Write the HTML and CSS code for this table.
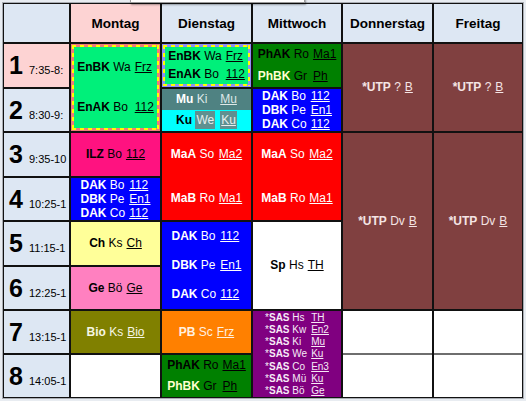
FILE: index.html
```html
<!DOCTYPE html>
<html lang="de">
<head>
<meta charset="utf-8">
<title>Stundenplan</title>
<link rel="stylesheet" href="styles.css">
</head>
<body>
<div class="page">
  <div class="tip"></div>
  <div class="tt">
    <div class="hd"></div>
    <div class="hd today">Montag</div>
    <div class="hd">Dienstag</div>
    <div class="hd">Mittwoch</div>
    <div class="hd">Donnerstag</div>
    <div class="hd">Freitag</div>

    <!-- row 1 -->
    <div class="per today"><div class="pl"><span class="pn">1</span><span class="pt">7:35-8:</span></div></div>
    <div class="cell span2 dash-salmon">
      <div class="frame"><div class="les fill-green">
        <span><b>EnBK</b> Wa</span><span class="rm">Frz</span>
        <span><b>EnAK</b> Bo</span><span class="rm">112</span>
      </div></div>
    </div>
    <div class="cell dash-lav">
      <div class="frame"><div class="les fill-green">
        <span><b>EnBK</b> Wa</span><span class="rm">Frz</span>
        <span><b>EnAK</b> Bo</span><span class="rm">112</span>
      </div></div>
    </div>
    <div class="cell les dkgreen">
      <span><b>PhAK</b> Ro</span><span class="rm">Ma1</span>
      <span><b class="ly">PhBK</b> Gr</span><span class="rm">Ph</span>
    </div>
    <div class="cell span2 les brown">
      <span><b>*UTP</b> ?</span><span class="rm">B</span>
    </div>
    <div class="cell span2 les brown">
      <span><b>*UTP</b> ?</span><span class="rm">B</span>
    </div>

    <!-- row 2 -->
    <div class="per"><div class="pl"><span class="pn">2</span><span class="pt">8:30-9:</span></div></div>
    <div class="cell split">
      <div class="band band-top"></div>
      <div class="band band-bot"></div>
      <span class="s-a top-t"><b class="wh">Mu</b> Ki</span><span class="s-b top-t rm">Mu</span>
      <span class="s-a bot-t"><b>Ku</b> <span class="hl">We</span></span><span class="s-b bot-t"><span class="hl rm">Ku</span></span>
    </div>
    <div class="cell les blue">
      <span><b>DAK</b> Bo</span><span class="rm">112</span>
      <span><b>DBK</b> Pe</span><span class="rm">En1</span>
      <span><b>DAK</b> Co</span><span class="rm">112</span>
    </div>

    <!-- row 3 -->
    <div class="per"><div class="pl"><span class="pn">3</span><span class="pt">9:35-10</span></div></div>
    <div class="cell les hotpink">
      <span><b>ILZ</b> Bo</span><span class="rm">112</span>
    </div>
    <div class="cell span2 les red">
      <span><b>MaA</b> So</span><span class="rm">Ma2</span>
      <span><b>MaB</b> Ro</span><span class="rm">Ma1</span>
    </div>
    <div class="cell span2 les red">
      <span><b>MaA</b> So</span><span class="rm">Ma2</span>
      <span><b>MaB</b> Ro</span><span class="rm">Ma1</span>
    </div>
    <div class="cell span4 les brown">
      <span><b>*UTP</b> Dv</span><span class="rm">B</span>
    </div>
    <div class="cell span4 les brown">
      <span><b>*UTP</b> Dv</span><span class="rm">B</span>
    </div>

    <!-- row 4 -->
    <div class="per"><div class="pl"><span class="pn">4</span><span class="pt">10:25-1</span></div></div>
    <div class="cell les blue">
      <span><b>DAK</b> Bo</span><span class="rm">112</span>
      <span><b>DBK</b> Pe</span><span class="rm">En1</span>
      <span><b>DAK</b> Co</span><span class="rm">112</span>
    </div>

    <!-- row 5 -->
    <div class="per"><div class="pl"><span class="pn">5</span><span class="pt">11:15-1</span></div></div>
    <div class="cell les yellow">
      <span><b>Ch</b> Ks</span><span class="rm">Ch</span>
    </div>
    <div class="cell span2 les blue">
      <span><b>DAK</b> Bo</span><span class="rm">112</span>
      <span><b>DBK</b> Pe</span><span class="rm">En1</span>
      <span><b>DAK</b> Co</span><span class="rm">112</span>
    </div>
    <div class="cell span2 les white">
      <span><b>Sp</b> Hs</span><span class="rm">TH</span>
    </div>

    <!-- row 6 -->
    <div class="per"><div class="pl"><span class="pn">6</span><span class="pt">12:25-1</span></div></div>
    <div class="cell les rose">
      <span><b>Ge</b> Bö</span><span class="rm">Ge</span>
    </div>

    <!-- row 7 -->
    <div class="per"><div class="pl"><span class="pn">7</span><span class="pt">13:15-1</span></div></div>
    <div class="cell les olive">
      <span><b>Bio</b> Ks</span><span class="rm">Bio</span>
    </div>
    <div class="cell les orange">
      <span><b>PB</b> Sc</span><span class="rm">Frz</span>
    </div>
    <div class="cell span2 les purple">
      <span>*<b>SAS</b> Hs</span><span class="rm">TH</span>
      <span>*<b>SAS</b> Kw</span><span class="rm">En2</span>
      <span>*<b>SAS</b> Ki</span><span class="rm">Mu</span>
      <span>*<b>SAS</b> We</span><span class="rm">Ku</span>
      <span>*<b>SAS</b> Co</span><span class="rm">En3</span>
      <span>*<b>SAS</b> Mü</span><span class="rm">Ku</span>
      <span>*<b>SAS</b> Bö</span><span class="rm">Ge</span>
    </div>
    <div class="cell span2 pair"><div class="blank"></div><div class="blank"></div></div>
    <div class="cell span2 pair"><div class="blank"></div><div class="blank"></div></div>

    <!-- row 8 -->
    <div class="per"><div class="pl"><span class="pn">8</span><span class="pt">14:05-1</span></div></div>
    <div class="cell white"></div>
    <div class="cell les dkgreen">
      <span><b>PhAK</b> Ro</span><span class="rm">Ma1</span>
      <span><b class="ly">PhBK</b> Gr</span><span class="rm">Ph</span>
    </div>
  </div>
</div>
</body>
</html>
```

FILE: styles.css
```css
html, body {
  margin: 0;
  padding: 0;
}
body {
  background: #e8ecf1;
  font-family: "Liberation Sans", Arial, sans-serif;
  color: #000;
}
.page {
  position: relative;
  padding: 3px 0 0 3px;
  width: 523px;
  height: 398px;
}
.tip {
  position: absolute;
  left: 130px;
  top: -3px;
  width: 173px;
  height: 4px;
  background: #fff;
  border: 1px solid #9a9a9a;
  box-shadow: 1px 2px 2px rgba(0, 0, 0, 0.35);
  z-index: 2;
}
.tt {
  display: grid;
  grid-template-columns: 65px 89px 89px 88px 89px 88px;
  grid-template-rows: 38px 43px 42px 43px 42px 43px 42px 42px 42px;
  gap: 2px;
  padding: 1px;
  width: 520px;
  box-sizing: border-box;
  background: #111;
  box-shadow: 0 0 0 1px #a9adb3;
}
.span2 { grid-row: span 2; }
.span4 { grid-row: span 4; }

.hd {
  background: #dde7f3;
  display: grid;
  place-items: center;
  font-weight: bold;
  font-size: 13.5px;
}
.hd.today, .per.today { background: #fdd3d3; }

.per {
  background: #dde7f3;
  display: flex;
  align-items: center;
  overflow: hidden;
}
.pl {
  display: flex;
  align-items: baseline;
  white-space: nowrap;
}
.pn {
  width: 20px;
  margin-left: 2px;
  text-align: center;
  font-weight: bold;
  font-size: 25px;
  line-height: 1;
}
.pt {
  margin-left: 3px;
  font-size: 11px;
}

.cell {
  overflow: hidden;
  min-height: 0;
}
.les {
  display: grid;
  grid-template-columns: auto auto;
  grid-auto-rows: 1fr;
  justify-content: center;
  align-items: center;
  column-gap: 4px;
  font-size: 12px;
  white-space: nowrap;
  line-height: 13px;
}
.rm { text-decoration: underline; }
b { font-weight: bold; }

/* dashed framed cells */
.dash-salmon { background: #ef7b7b; padding: 1px; }
.dash-lav { background: #8f8ff5; padding: 1px; }
.frame {
  height: 100%;
  box-sizing: border-box;
  padding: 2px;
  background:
    repeating-linear-gradient(90deg, #ffff00 0 4px, transparent 4px 8px) left top / 100% 2px no-repeat,
    repeating-linear-gradient(90deg, #ffff00 0 4px, transparent 4px 8px) left bottom / 100% 2px no-repeat,
    repeating-linear-gradient(180deg, #ffff00 0 4px, transparent 4px 8px) left top / 2px 100% no-repeat,
    repeating-linear-gradient(180deg, #ffff00 0 4px, transparent 4px 8px) right top / 2px 100% no-repeat;
}
.fill-green { background: #00f07a; height: 100%; }

/* colours */
.dkgreen { background: #008000; color: #000; }
.ly { color: #ffffd0; }
.brown { background: #804040; color: #f4e4e4; }
.blue { background: #0000ff; color: #fff; }
.red { background: #ff0000; color: #fff; }
.hotpink { background: #ff1280; color: #000; }
.yellow { background: #ffff99; color: #000; }
.rose { background: #ff80c0; color: #000; }
.olive { background: #808000; color: #f6f6e4; }
.orange { background: #ff8000; color: #fff0e0; }
.purple { background: #800080; color: #f6eaf6; font-size: 10px; line-height: 11px; }
.white { background: #fff; color: #000; }

/* split cell (Dienstag 2) */
.split {
  display: grid;
  grid-template-columns: 1fr auto auto 1fr;
  grid-template-rows: 1fr 1fr;
  column-gap: 0;
  align-items: center;
  font-size: 12px;
  white-space: nowrap;
  line-height: 13px;
}
.band { grid-column: 1 / -1; align-self: stretch; }
.band-top { grid-row: 1; background: #4f8282; }
.band-bot { grid-row: 2; background: #00ffff; }
.s-a { grid-column: 2; margin-right: 5px; }
.s-b { grid-column: 3; }
.top-t { grid-row: 1; color: #dfe8e8; }
.bot-t { grid-row: 2; color: #000; }
.wh { color: #fff; }
.hl { background: #5f9090; color: #e8eeee; padding: 2px 1px; }

/* empty pair (Do/Fr 7-8) */
.pair {
  display: flex;
  flex-direction: column;
  gap: 2px;
  background: #6e6e6e;
}
.blank { flex: 1; background: #fff; }
```
